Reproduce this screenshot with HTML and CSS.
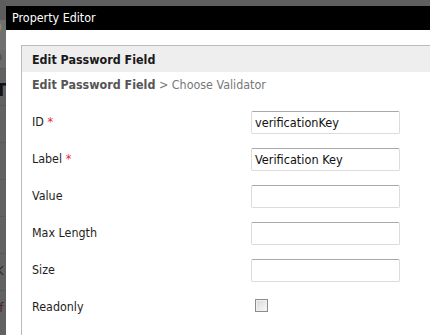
FILE: index.html
```html
<!DOCTYPE html>
<html lang="en">
<head>
    <meta charset="UTF-8">
    <title>Property Editor</title>
    <link rel="stylesheet" href="styles.css">
</head>
<body>
    <div class="screen">
        <div class="behind">
            <div class="behind-top"></div>
            <div class="behind-head">P</div>
            <div class="behind-sub">o</div>
            <div class="behind-row bold">T</div>
            <div class="behind-row"></div>
            <div class="behind-row"></div>
            <div class="behind-row"></div>
            <div class="behind-row"></div>
            <div class="behind-row">K</div>
            <div class="behind-row red">if</div>
        </div>
        <div class="dialog">
            <div class="titlebar">Property Editor</div>
            <div class="dialog-body">
                <div class="panel">
                    <div class="panel-head">Edit Password Field</div>
                    <div class="crumbs"><b>Edit Password Field</b> &gt; Choose Validator</div>
                    <form class="fields">
                        <label>ID <span class="req">*</span></label>
                        <input type="text" value="verificationKey">

                        <label>Label <span class="req">*</span></label>
                        <input type="text" value="Verification Key">

                        <label>Value</label>
                        <input type="text">

                        <label>Max Length</label>
                        <input type="text">

                        <label>Size</label>
                        <input type="text">

                        <label>Readonly</label>
                        <div class="check-cell"><span class="check"></span></div>
                    </form>
                </div>
            </div>
        </div>
    </div>
</body>
</html>
```

FILE: styles.css
```css
html, body {
    margin: 0;
    height: 100%;
    overflow: hidden;
}
body {
    background: #5f5f5f;
    font-family: 'DejaVu Sans Condensed', 'DejaVu Sans', sans-serif;
    font-size: 12.4px;
    color: #222;
}
.screen {
    display: flex;
    height: 100%;
}
.behind {
    width: 6px;
    flex: none;
    overflow: hidden;
    background: #626262;
    font-size: 13px;
    line-height: 1;
}
.behind-top {
    height: 20px;
    background: #5d5d5d;
}
.behind-head {
    height: 30px;
    background: #707070;
    color: #8f8f5a;
    font-size: 22px;
    text-indent: -10px;
    overflow: hidden;
}
.behind-sub {
    height: 18px;
    background: #6a6a6a;
    color: #4a4a4a;
    text-indent: -5px;
    overflow: hidden;
}
.behind-row {
    height: 37px;
    border-top: 1px dotted #555;
    box-sizing: border-box;
    color: #2a2a2a;
    text-indent: -4px;
    padding-top: 10px;
}
.behind-row.bold {
    font-weight: bold;
    color: #111;
    font-size: 17px;
    padding-top: 13px;
}
.behind-row.red { color: #4a2020; }
.dialog {
    flex: 1;
    margin-top: 6px;
    background: #fff;
    display: flex;
    flex-direction: column;
}
.titlebar {
    height: 24px;
    line-height: 24px;
    background: #000;
    color: #fff;
    padding-left: 6px;
    flex: none;
}
.dialog-body {
    padding: 15px 0 0 15px;
    flex: 1;
}
.panel {
    border-top: 1px solid #bbb;
    border-left: 1px solid #bbb;
    height: 100%;
}
.panel-head {
    height: 26px;
    line-height: 27px;
    background: #eee;
    padding-left: 10px;
    font-weight: bold;
    color: #1a1a1a;
}
.crumbs {
    height: 32px;
    line-height: 18px;
    padding: 4px 0 0 10px;
    box-sizing: border-box;
    color: #777;
}
.crumbs b {
    color: #555;
}
.fields {
    display: grid;
    grid-template-columns: 219px 149px;
    grid-auto-rows: 37px;
    align-items: center;
    padding-left: 10px;
    margin: 0;
}
.fields label {
    color: #1e1e1e;
    padding-bottom: 3px;
}
.req {
    color: #e8283c;
}
.fields input {
    width: 149px;
    height: 23px;
    box-sizing: border-box;
    margin: 0;
    padding: 0 3px;
    border: 1px solid #dcdcdc;
    border-top-color: #a8a8a8;
    border-radius: 2px;
    font-family: inherit;
    font-size: 12.6px;
    color: #111;
    background: #fff;
}
.check-cell {
    padding-left: 4px;
    padding-bottom: 5px;
}
.check {
    display: block;
    width: 13px;
    height: 13px;
    box-sizing: border-box;
    border: 1px solid #8c8c8c;
    background: linear-gradient(135deg, #d6d6dc, #fbfbfb);
    box-shadow: inset 0 0 0 1px #f0f0f0;
}
```
